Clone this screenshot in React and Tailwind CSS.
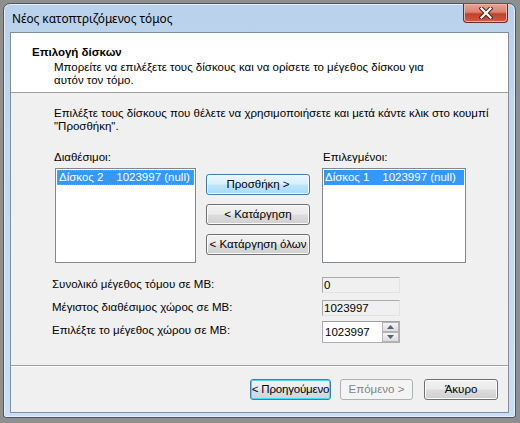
import React from 'react'

const ui = { fontFamily: '"Liberation Sans", Arial, sans-serif' }
const title = { fontFamily: '"Noto Sans", "Open Sans", sans-serif' }

const Btn = ({ children, kind = 'normal', className = '' }) => {
  const styles = {
    normal:
      'border-[#707070] text-black bg-[linear-gradient(to_bottom,#f2f2f2_0%,#ebebeb_48%,#dddddd_52%,#cfcfcf_100%)] shadow-[inset_0_0_0_1px_#fbfbfb]',
    hot:
      'border-[#3c7fb1] text-black bg-[linear-gradient(to_bottom,#eaf6fd_0%,#d9f0fc_48%,#bee6fd_52%,#a7d9f5_100%)] shadow-[inset_0_0_0_1px_#f4fbfe]',
    focus:
      'border-[#3c7fb1] text-black bg-[linear-gradient(to_bottom,#f0f4f7_0%,#e6ecf1_48%,#d9e1e7_52%,#ccd5dd_100%)] shadow-[inset_0_0_0_1px_#48d8fb]',
    disabled: 'border-[#adb2b5] text-[#838383] bg-[#f4f4f4]',
  }
  return (
    <div
      className={`flex items-center justify-center whitespace-nowrap border rounded-[3px] text-[11.5px] leading-none ${styles[kind]} ${className}`}
    >
      {children}
    </div>
  )
}

const ListBox = ({ item, focus, className = '' }) => (
  <div className={`h-[95px] border border-[#828790] bg-white p-px ${className}`}>
    <div
      className={`h-[15px] flex items-center bg-[#3399ff] text-white text-[11.5px] whitespace-pre pl-[1px] ${
        focus ? 'border border-dotted border-[#e0904a]' : ''
      }`}
    >
      {item}
    </div>
  </div>
)

const ReadOnly = ({ value }) => (
  <div className="w-[78px] h-[16px] border border-[#a9a9a9] border-b-[#e3e3e3] border-r-[#e3e3e3] bg-[#f0f0f0] text-[11.5px] leading-[14px] pl-px">
    {value}
  </div>
)

const Arrow = ({ up }) => (
  <svg width="7" height="4" viewBox="0 0 7 4">
    <path d={up ? 'M0 4 L3.5 0 L7 4 Z' : 'M0 0 L3.5 4 L7 0 Z'} fill="#4d6185" />
  </svg>
)

export default function App() {
  return (
    <div className="w-[520px] h-[423px] overflow-hidden bg-[#8f8f8f] pt-[3px] pl-[3px]" style={ui}>
      <div className="w-[513px] h-[415px] rounded-t-[7px] rounded-b-[3px] border border-[#4a5868] bg-[linear-gradient(to_bottom,#b9d1ea_0%,#c3d8ef_30%,#cadef4_100%)] shadow-[inset_0_0_0_1px_#e4eefa] flex flex-col">
        {/* title bar */}
        <div className="h-[28px] flex items-start justify-between pl-[8px] pr-[7px]">
          <div className="mt-[6px] text-[11.8px] leading-[16px] text-black" style={title}>
            Νέος κατοπτριζόμενος τόμος
          </div>
          <div className="w-[45px] h-[19px] rounded-b-[4px] border border-t-0 border-[#6d2b22] bg-[linear-gradient(to_bottom,#e8a493_0%,#d98471_45%,#c4402a_55%,#d25a3f_100%)] shadow-[inset_0_0_0_1px_#f0b6a8] flex items-center justify-center">
            <svg width="14" height="12" viewBox="0 0 14 12">
              <path d="M2.5 1.5 L11.5 10.5 M11.5 1.5 L2.5 10.5" stroke="#4b2520" strokeWidth="4.2" strokeLinecap="square" />
              <path d="M2.5 1.5 L11.5 10.5 M11.5 1.5 L2.5 10.5" stroke="#ffffff" strokeWidth="2.2" strokeLinecap="square" />
            </svg>
          </div>
        </div>

        {/* client area */}
        <div className="ml-[6px] w-[499px] h-[381px] border border-[#7f8fa1] bg-[#f0f0f0] flex flex-col text-black">
          {/* header */}
          <div className="h-[59px] bg-white pl-[21px] pt-[12px]">
            <div className="text-[11.5px] leading-[15px] font-bold">Επιλογή δίσκων</div>
            <div className="pl-[22px] text-[11.5px] leading-[13px] mt-px">
              <div>Μπορείτε να επιλέξετε τους δίσκους και να ορίσετε το μέγεθος δίσκου για</div>
              <div>αυτόν τον τόμο.</div>
            </div>
          </div>
          <div className="h-px bg-[#a0a0a0]" />

          {/* body */}
          <div className="h-[272px] flex flex-col pl-[43px]">
            <div className="pt-[14px] text-[11.5px] leading-[13px]">
              <div>Επιλέξτε τους δίσκους που θέλετε να χρησιμοποιήσετε και μετά κάντε κλικ στο κουμπί</div>
              <div>"Προσθήκη".</div>
            </div>

            <div className="mt-[18px] flex items-start">
              <div className="flex flex-col">
                <div className="text-[11.5px] leading-[13px]">Διαθέσιμοι:</div>
                <ListBox item="Δίσκος 2    1023997 (null)" focus className="mt-[4px] ml-px w-[141px]" />
              </div>
              <div className="ml-[10px] mt-[23px] w-[104px] flex flex-col gap-[9px]">
                <Btn kind="hot" className="h-[21px]">Προσθήκη &gt;</Btn>
                <Btn className="h-[21px]">&lt; Κατάργηση</Btn>
                <Btn className="h-[21px]">&lt; Κατάργηση όλων</Btn>
              </div>
              <div className="ml-[12px] flex flex-col">
                <div className="ml-px text-[11.5px] leading-[13px]">Επιλεγμένοι:</div>
                <ListBox item="Δίσκος 1    1023997 (null)" className="mt-[4px] w-[144px]" />
              </div>
            </div>

            <div className="mt-[14px] -ml-[2px] flex flex-col text-[11.5px]">
              <div className="h-[16px] flex items-center">
                <div className="w-[270px]">Συνολικό μέγεθος τόμου σε MB:</div>
                <ReadOnly value="0" />
              </div>
              <div className="mt-[7px] h-[16px] flex items-center">
                <div className="w-[270px]">Μέγιστος διαθέσιμος χώρος σε MB:</div>
                <ReadOnly value="1023997" />
              </div>
              <div className="mt-[5px] h-[22px] flex items-center">
                <div className="w-[270px] -mt-[2px]">Επιλέξτε το μέγεθος χώρου σε MB:</div>
                <div className="w-[78px] h-[22px] border border-[#abadb3] border-t-[#a0a0a0] bg-white flex">
                  <div className="flex-1 pl-[2px] pt-[3px] leading-[14px]">1023997</div>
                  <div className="w-[17px] flex flex-col">
                    <div className="h-[10px] border border-[#b4b4b4] bg-[linear-gradient(to_bottom,#f4f4f4,#dcdcdc)] flex items-center justify-center">
                      <Arrow up />
                    </div>
                    <div className="h-[10px] border border-[#b4b4b4] bg-[linear-gradient(to_bottom,#f4f4f4,#dcdcdc)] flex items-center justify-center">
                      <Arrow />
                    </div>
                  </div>
                </div>
              </div>
            </div>
          </div>

          <div className="h-px bg-[#a0a0a0]" />
          <div className="h-px bg-white" />

          {/* footer */}
          <div className="flex-1 flex items-start justify-end pr-[10px] pt-[12px]">
            <Btn kind="focus" className="w-[81px] h-[21px] tracking-[-0.2px]">&lt; Προηγούμενο</Btn>
            <Btn kind="disabled" className="ml-[9px] w-[73px] h-[21px]">Επόμενο &gt;</Btn>
            <Btn className="ml-[11px] w-[74px] h-[21px]">Άκυρο</Btn>
          </div>
        </div>
      </div>
    </div>
  )
}
